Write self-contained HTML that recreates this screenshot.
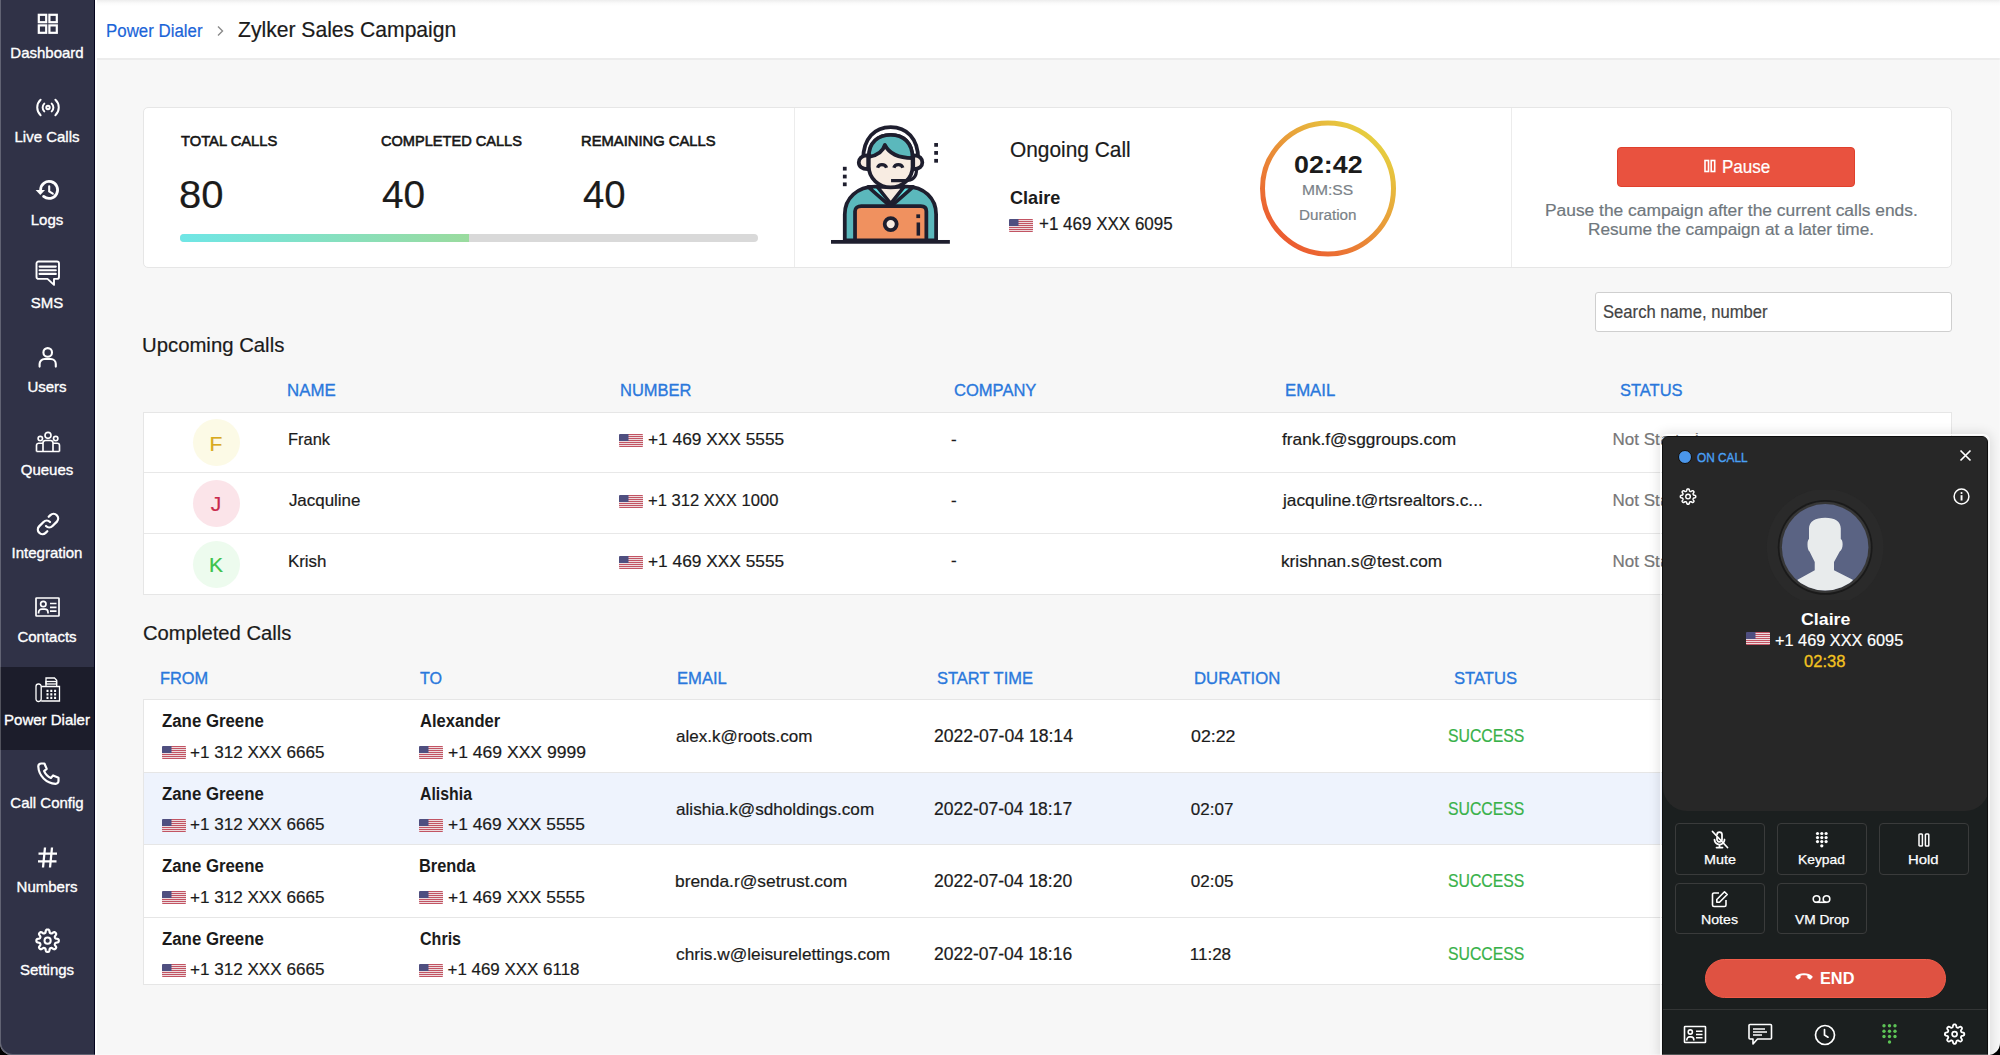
<!DOCTYPE html>
<html><head><meta charset="utf-8">
<style>
*{box-sizing:border-box;margin:0;padding:0}
html,body{width:2000px;height:1055px;overflow:hidden;background:#000}
body{font-family:"Liberation Sans",sans-serif;color:#222;position:relative}
.a{position:absolute;white-space:nowrap;-webkit-text-stroke-width:0.2px}
#win{position:absolute;left:0;top:0;width:2000px;height:1055px;background:#f7f7f7;border-radius:0 0 12px 12px;overflow:hidden}
.flag{position:absolute;width:24px;height:13px;border-radius:1px;background:linear-gradient(#4f4f80,#4f4f80) 0 0/9.5px 7px no-repeat,repeating-linear-gradient(#c25463 0 1px,#eddadd 1px 2px)}
.wb{position:absolute;width:89.5px;height:51.5px;border:1px solid #3a3b3b;border-radius:4px}
.st{-webkit-text-stroke:0.3px currentColor}
.st2{-webkit-text-stroke:0.15px currentColor}
</style></head><body>
<div id="win">
<div class="a" style="left:0;top:0;width:95px;height:1055px;background:#303247"></div>
<div class="a" style="left:0;top:666.67px;width:94px;height:83.33px;background:#1c1d2b"></div>
<div class="a" style="left:94px;top:0;width:1px;height:1055px;background:#03031c"></div>
<div class="a" style="left:95px;top:0;width:2px;height:1055px;background:#fff"></div>
<svg class="a" style="left:37px;top:13px" width="22" height="22" viewBox="0 0 22 22" fill="none" stroke="#fff" stroke-width="2.2"><rect x="1.8" y="1.8" width="7.4" height="7.4"/><rect x="12.4" y="1.8" width="7.4" height="7.4"/><rect x="1.8" y="12.4" width="7.4" height="7.4"/><rect x="12.4" y="12.4" width="7.4" height="7.4"/></svg>
<svg class="a" style="left:36px;top:98px" width="24" height="19" viewBox="0 0 24 19" fill="none" stroke="#fff" stroke-width="2" stroke-linecap="round"><circle cx="12" cy="9.5" r="1.7"/><path d="M8.3 5.6a5.4 5.4 0 0 0 0 7.8M15.7 5.6a5.4 5.4 0 0 1 0 7.8M4.6 1.8a10.5 10.5 0 0 0 0 15.4M19.4 1.8a10.5 10.5 0 0 1 0 15.4"/></svg>
<svg class="a" style="left:35px;top:179px" width="26" height="23" viewBox="0 0 26 23" fill="none" stroke="#fff" stroke-width="2.8" stroke-linecap="round"><path d="M5.6 10.6A8.5 8.5 0 1 1 8.6 17.4"/><path d="M0.6 11h9.4l-4.7 5z" fill="#fff" stroke="none"/><path d="M14.2 7.3v5.2l3.6 2.2" stroke-width="2.1"/></svg>
<svg class="a" style="left:35px;top:260px" width="26" height="27" viewBox="0 0 26 27" fill="none" stroke="#fff" stroke-width="1.9" stroke-linejoin="round"><path d="M3.5 1.5h18.5a2 2 0 0 1 2 2v13.4a2 2 0 0 1-2 2h-3v6l-6.5-6H3.5a2 2 0 0 1-2-2V3.5a2 2 0 0 1 2-2z"/><path d="M4.6 6.6h16.2M4.6 10.3h16.2M4.6 13.9h16.2" stroke-width="2.1" stroke-linecap="round"/></svg>
<svg class="a" style="left:37px;top:346px" width="22" height="23" viewBox="0 0 22 23" fill="none" stroke="#fff" stroke-width="2.1" stroke-linecap="round"><circle cx="10.7" cy="6.4" r="4.3"/><path d="M2.6 20.6v-2.6a5 5 0 0 1 5-5h6.2a5 5 0 0 1 5 5v2.6"/></svg>
<svg class="a" style="left:35px;top:430.5px" width="26" height="22" viewBox="0 0 26 22" fill="none" stroke="#fff" stroke-width="1.65" stroke-linejoin="round"><circle cx="13" cy="4.3" r="3"/><circle cx="5.3" cy="7.5" r="2.2"/><circle cx="20.7" cy="7.5" r="2.2"/><path d="M1.5 20.5v-6a2.3 2.3 0 0 1 2.3-2.3h3.5M24.5 20.5v-6a2.3 2.3 0 0 0-2.3-2.3h-3.5M1.5 20.5h23M8 20.5v-8.5a2.5 2.5 0 0 1 2.5-2.5h5a2.5 2.5 0 0 1 2.5 2.5v8.5"/></svg>
<svg class="a" style="left:36px;top:512px" width="24" height="24" viewBox="0 0 24 24" fill="none" stroke="#fff" stroke-width="2.3" stroke-linecap="round"><path d="M10 14a4.6 4.6 0 0 0 6.5 0l4.4-4.4a4.6 4.6 0 0 0-6.5-6.5l-1.7 1.7"/><path d="M14 10a4.6 4.6 0 0 0-6.5 0l-4.4 4.4a4.6 4.6 0 0 0 6.5 6.5l1.7-1.7"/></svg>
<svg class="a" style="left:35px;top:597px" width="25" height="20" viewBox="0 0 25 20" fill="none" stroke="#fff" stroke-width="1.7"><rect x="1" y="1" width="23" height="18" rx="0.6"/><circle cx="8.3" cy="7" r="2.7"/><path d="M3.6 16.5v-1.2a3.2 3.2 0 0 1 3.2-3.2h3a3.2 3.2 0 0 1 3.2 3.2v1.2M15 6.5h6.5M15 10.3h6.5M15 14.1h6.5"/></svg>
<svg class="a" style="left:35px;top:677px" width="26" height="26" viewBox="0 0 26 26" fill="none" stroke="#fff" stroke-width="1.3"><rect x="1" y="7" width="5.2" height="17.5" rx="2.4"/><path d="M6.2 9.5h18.3v14.5H6.2"/><path d="M11 9.5V1h8.5l2.2 2.2v6.3"/><rect x="11" y="4.5" width="10.5" height="2.5"/><path d="M11.5 13.8h2M15.3 13.8h2M19.1 13.8h2M11.5 17.3h2M15.3 17.3h2M19.1 17.3h2M11.5 20.8h2M15.3 20.8h2M19.1 20.8h2" stroke-width="2.2"/></svg>
<svg class="a" style="left:36px;top:762px" width="24" height="24" viewBox="0 0 24 24" fill="none" stroke="#fff" stroke-width="2.2" stroke-linejoin="round"><path d="M5.2 1.5h3.2l2.3 5.4-2.6 2.2c1.3 2.9 4 5.7 6.8 6.9l2.2-2.6 5.4 2.3v3.2c0 1.6-1.3 3-3 2.9C10.3 21.3 2.7 13.7 2.3 4.5c-.1-1.7 1.3-3 2.9-3z"/></svg>
<svg class="a" style="left:37px;top:846px" width="21" height="23" viewBox="0 0 21 23" fill="none" stroke="#fff" stroke-width="2.3"><path d="M8 1.5L6 21.5M15 1.5l-2 20M1.5 7.6h18.5M1 15.4h18.5"/></svg>
<svg class="a" style="left:33px;top:927px" width="28" height="28" viewBox="0 0 28 28" fill="none" stroke="#fff" stroke-linejoin="round"><path d="M25.80 13.70L25.79 13.99L25.75 14.28L25.68 14.57L25.55 14.85L25.32 15.11L24.92 15.34L24.35 15.51L23.68 15.63L23.10 15.74L22.70 15.87L22.45 16.03L22.29 16.20L22.17 16.38L22.08 16.57L21.99 16.76L21.91 16.96L21.85 17.16L21.80 17.37L21.80 17.61L21.87 17.89L22.06 18.27L22.39 18.76L22.77 19.32L23.06 19.84L23.18 20.28L23.16 20.63L23.05 20.92L22.90 21.17L22.72 21.40L22.52 21.62L22.30 21.82L22.07 22.00L21.82 22.15L21.53 22.26L21.18 22.28L20.74 22.16L20.22 21.87L19.66 21.49L19.17 21.16L18.79 20.97L18.51 20.90L18.27 20.90L18.06 20.95L17.86 21.01L17.66 21.09L17.47 21.18L17.28 21.27L17.10 21.39L16.93 21.55L16.77 21.80L16.64 22.20L16.53 22.78L16.41 23.45L16.24 24.02L16.01 24.42L15.75 24.65L15.47 24.78L15.18 24.85L14.89 24.89L14.60 24.90L14.31 24.89L14.02 24.85L13.73 24.78L13.45 24.65L13.19 24.42L12.96 24.02L12.79 23.45L12.67 22.78L12.56 22.20L12.43 21.80L12.27 21.55L12.10 21.39L11.92 21.27L11.73 21.18L11.54 21.09L11.34 21.01L11.14 20.95L10.93 20.90L10.69 20.90L10.41 20.97L10.03 21.16L9.54 21.49L8.98 21.87L8.46 22.16L8.02 22.28L7.67 22.26L7.38 22.15L7.13 22.00L6.90 21.82L6.68 21.62L6.48 21.40L6.30 21.17L6.15 20.92L6.04 20.63L6.02 20.28L6.14 19.84L6.43 19.32L6.81 18.76L7.14 18.27L7.33 17.89L7.40 17.61L7.40 17.37L7.35 17.16L7.29 16.96L7.21 16.76L7.12 16.57L7.03 16.38L6.91 16.20L6.75 16.03L6.50 15.87L6.10 15.74L5.52 15.63L4.85 15.51L4.28 15.34L3.88 15.11L3.65 14.85L3.52 14.57L3.45 14.28L3.41 13.99L3.40 13.70L3.41 13.41L3.45 13.12L3.52 12.83L3.65 12.55L3.88 12.29L4.28 12.06L4.85 11.89L5.52 11.77L6.10 11.66L6.50 11.53L6.75 11.37L6.91 11.20L7.03 11.02L7.12 10.83L7.21 10.64L7.29 10.44L7.35 10.24L7.40 10.03L7.40 9.79L7.33 9.51L7.14 9.13L6.81 8.64L6.43 8.08L6.14 7.56L6.02 7.12L6.04 6.77L6.15 6.48L6.30 6.23L6.48 6.00L6.68 5.78L6.90 5.58L7.13 5.40L7.38 5.25L7.67 5.14L8.02 5.12L8.46 5.24L8.98 5.53L9.54 5.91L10.03 6.24L10.41 6.43L10.69 6.50L10.93 6.50L11.14 6.45L11.34 6.39L11.54 6.31L11.73 6.22L11.92 6.13L12.10 6.01L12.27 5.85L12.43 5.60L12.56 5.20L12.67 4.62L12.79 3.95L12.96 3.38L13.19 2.98L13.45 2.75L13.73 2.62L14.02 2.55L14.31 2.51L14.60 2.50L14.89 2.51L15.18 2.55L15.47 2.62L15.75 2.75L16.01 2.98L16.24 3.38L16.41 3.95L16.53 4.62L16.64 5.20L16.77 5.60L16.93 5.85L17.10 6.01L17.28 6.13L17.47 6.22L17.66 6.31L17.86 6.39L18.06 6.45L18.27 6.50L18.51 6.50L18.79 6.43L19.17 6.24L19.66 5.91L20.22 5.53L20.74 5.24L21.18 5.12L21.53 5.14L21.82 5.25L22.07 5.40L22.30 5.58L22.52 5.78L22.72 6.00L22.90 6.23L23.05 6.48L23.16 6.77L23.18 7.12L23.06 7.56L22.77 8.08L22.39 8.64L22.06 9.13L21.87 9.51L21.80 9.79L21.80 10.03L21.85 10.24L21.91 10.44L21.99 10.64L22.08 10.83L22.17 11.02L22.29 11.20L22.45 11.37L22.70 11.53L23.10 11.66L23.68 11.77L24.35 11.89L24.92 12.06L25.32 12.29L25.55 12.55L25.68 12.83L25.75 13.12L25.79 13.41Z" stroke-width="2.2"/><circle cx="14.600000000000001" cy="13.700000000000045" r="3.1" stroke-width="2.0"/></svg>

<div class="a" style="-webkit-text-stroke:0.35px #fff;left:0;width:94px;text-align:center;top:45.20px;font-size:15px;line-height:1;color:#fff">Dashboard</div>
<div class="a" style="-webkit-text-stroke:0.35px #fff;left:0;width:94px;text-align:center;top:128.53px;font-size:15px;line-height:1;color:#fff">Live Calls</div>
<div class="a" style="-webkit-text-stroke:0.35px #fff;left:0;width:94px;text-align:center;top:211.86px;font-size:15px;line-height:1;color:#fff">Logs</div>
<div class="a" style="-webkit-text-stroke:0.35px #fff;left:0;width:94px;text-align:center;top:295.19px;font-size:15px;line-height:1;color:#fff">SMS</div>
<div class="a" style="-webkit-text-stroke:0.35px #fff;left:0;width:94px;text-align:center;top:378.52px;font-size:15px;line-height:1;color:#fff">Users</div>
<div class="a" style="-webkit-text-stroke:0.35px #fff;left:0;width:94px;text-align:center;top:461.85px;font-size:15px;line-height:1;color:#fff">Queues</div>
<div class="a" style="-webkit-text-stroke:0.35px #fff;left:0;width:94px;text-align:center;top:545.18px;font-size:15px;line-height:1;color:#fff">Integration</div>
<div class="a" style="-webkit-text-stroke:0.35px #fff;left:0;width:94px;text-align:center;top:628.51px;font-size:15px;line-height:1;color:#fff">Contacts</div>
<div class="a" style="-webkit-text-stroke:0.35px #fff;left:0;width:94px;text-align:center;top:711.84px;font-size:15px;line-height:1;color:#fff">Power Dialer</div>
<div class="a" style="-webkit-text-stroke:0.35px #fff;left:0;width:94px;text-align:center;top:795.17px;font-size:15px;line-height:1;color:#fff">Call Config</div>
<div class="a" style="-webkit-text-stroke:0.35px #fff;left:0;width:94px;text-align:center;top:878.50px;font-size:15px;line-height:1;color:#fff">Numbers</div>
<div class="a" style="-webkit-text-stroke:0.35px #fff;left:0;width:94px;text-align:center;top:961.83px;font-size:15px;line-height:1;color:#fff">Settings</div>
<div class="a" style="left:97px;top:0;width:1903px;height:60px;background:linear-gradient(#ededed,#fafafa 3px,#fff 6px);border-bottom:2px solid #ececec"></div>
<svg class="a" style="left:215px;top:24px" width="10" height="14" viewBox="0 0 10 14"><path d="M3 2.5l4.5 4.5L3 11.5" fill="none" stroke="#8a8a8a" stroke-width="1.4"/></svg>
<div class="a" style="left:143px;top:107px;width:1809px;height:161px;background:#fff;border:1px solid #e6e6e6;border-radius:5px"></div>
<div class="a" style="left:794px;top:108px;width:1px;height:159px;background:#ececec"></div>
<div class="a" style="left:1511px;top:108px;width:1px;height:159px;background:#ececec"></div>
<div class="a" style="left:180px;top:233.5px;width:578px;height:8px;border-radius:4px;background:#d9d9d9;overflow:hidden"><div style="width:289px;height:8px;background:linear-gradient(90deg,#6fe6e6,#9adb9e)"></div></div>
<svg class="a" style="left:825px;top:118px" width="130" height="132" viewBox="0 0 1039 1055">
 <g stroke="#1e1e2e" stroke-width="30" stroke-linejoin="round" stroke-linecap="butt">
  <!-- body -->
  <path d="M158 978V770C158 640 260 548 400 548H650C790 548 888 640 888 770V978Z" fill="#5bb8bc"/>
  <!-- collar -->
  <path d="M345 550L525 708L705 550Z" fill="#62e0e2" stroke-width="28"/>
  <path d="M420 552L525 684L630 552Z" fill="#f8ece2" stroke-width="28"/>
  <!-- laptop -->
  <path d="M240 978V745C240 720 262 705 290 705H765C793 705 810 720 810 745V978Z" fill="#f0915f"/>
  <circle cx="525" cy="848" r="48" fill="#f8ece2"/>
  <!-- headset band -->
  <path d="M305 330C305 160 400 72 525 72C650 72 745 160 745 330" fill="#fff"/>
  <!-- face -->
  <path d="M350 330C350 200 420 135 525 135C630 135 700 200 700 330V390C700 480 620 555 525 555C430 555 350 480 350 390Z" fill="#f8ece2"/>
  <!-- hair -->
  <path d="M350 310C350 195 425 135 525 135C625 135 700 195 700 320C620 320 520 300 478 215C460 280 410 300 350 310Z" fill="#5bb8bc"/>
  <!-- ear pieces -->
  <path d="M345 300C290 295 270 330 270 355C270 385 295 410 345 408Z" fill="#f8ece2"/>
  <path d="M705 300C760 295 778 330 778 355C778 385 755 410 705 408Z" fill="#f8ece2"/>
  <!-- mic -->
  <path d="M730 408C735 470 700 500 640 500H528" fill="none" stroke-width="26"/>
  <!-- eyes -->
  <path d="M420 398C430 365 480 365 492 398M550 398C560 365 612 365 622 398" fill="none" stroke-width="26"/>
 </g>
 <g fill="#1e1e2e">
  <rect x="48" y="975" width="950" height="30"/>
  <rect x="730" y="770" width="30" height="30"/>
  <rect x="732" y="835" width="28" height="105"/>
  <rect x="873" y="200" width="30" height="30"/><rect x="873" y="264" width="30" height="30"/><rect x="873" y="327" width="30" height="30"/>
  <rect x="143" y="390" width="30" height="30"/><rect x="143" y="453" width="30" height="30"/><rect x="143" y="515" width="30" height="30"/>
 </g>
</svg>
<div class="flag" style="left:1009.4px;top:219.2px"></div>
<svg class="a" style="left:1258px;top:118px" width="140" height="140" viewBox="0 0 140 140"><defs><linearGradient id="rg" x1="0.15" y1="0.9" x2="0.85" y2="0.1"><stop offset="0" stop-color="#ec5a30"/><stop offset="1" stop-color="#e6cf40"/></linearGradient></defs><circle cx="70" cy="70.5" r="65.5" fill="#fff" stroke="url(#rg)" stroke-width="5"/></svg>
<div class="a" style="left:1617px;top:147px;width:238px;height:40px;background:#e9523f;border:1px solid #e0402c;border-radius:4px"></div>
<svg class="a" style="left:1704px;top:159px" width="12" height="14" viewBox="0 0 12 14"><rect x="1" y="1.5" width="3.5" height="11" fill="none" stroke="#fff" stroke-width="1.6"/><rect x="7.2" y="1.5" width="3.5" height="11" fill="none" stroke="#fff" stroke-width="1.6"/></svg>
<div class="a" style="left:1595px;top:292px;width:357px;height:40px;background:#fff;border:1px solid #cfcfcf;border-radius:3px"></div>
<div class="a" style="left:143px;top:411.5px;width:1809px;height:183.5px;background:#fff;border:1px solid #e6e6e6"></div>
<div class="a" style="left:144px;top:472px;width:1807px;height:1px;background:#e8e8e8"></div>
<div class="a" style="left:144px;top:533px;width:1807px;height:1px;background:#e8e8e8"></div>
<div class="a" style="left:192.5px;top:418.8px;width:47px;height:47px;border-radius:50%;background:#fcfae6"></div>
<div class="a" style="left:192.5px;top:432.52px;width:47px;text-align:center;font-size:21px;line-height:1;color:#d8a91e">F</div>
<div class="flag" style="left:619px;top:434.4px"></div>
<div class="a" style="left:951px;top:430.61px;font-size:17px;line-height:1;color:#1b1b1b">-</div>
<div class="a" style="left:192.5px;top:479.7px;width:47px;height:47px;border-radius:50%;background:#fbe4e9"></div>
<div class="a" style="left:192.5px;top:493.42px;width:47px;text-align:center;font-size:21px;line-height:1;color:#c9294c">J</div>
<div class="flag" style="left:619px;top:495.3px"></div>
<div class="a" style="left:951px;top:491.51px;font-size:17px;line-height:1;color:#1b1b1b">-</div>
<div class="a" style="left:192.5px;top:540.6px;width:47px;height:47px;border-radius:50%;background:#edfbee"></div>
<div class="a" style="left:192.5px;top:554.32px;width:47px;text-align:center;font-size:21px;line-height:1;color:#3dc24b">K</div>
<div class="flag" style="left:619px;top:556.2px"></div>
<div class="a" style="left:951px;top:552.41px;font-size:17px;line-height:1;color:#1b1b1b">-</div>
<div class="a" style="left:143px;top:699px;width:1809px;height:285.5px;background:#fff;border:1px solid #e6e6e6"></div>
<div class="a" style="left:144px;top:772.3px;width:1807px;height:72.5px;background:#eef3fd"></div>
<div class="a" style="left:144px;top:772px;width:1807px;height:1px;background:#e6e6e6"></div>
<div class="a" style="left:144px;top:844.3px;width:1807px;height:1px;background:#e6e6e6"></div>
<div class="a" style="left:144px;top:917px;width:1807px;height:1px;background:#e6e6e6"></div>
<div class="flag" style="left:162px;top:746.2px"></div>
<div class="flag" style="left:419px;top:746.2px"></div>
<div class="flag" style="left:162px;top:818.8px"></div>
<div class="flag" style="left:419px;top:818.8px"></div>
<div class="flag" style="left:162px;top:891.3px"></div>
<div class="flag" style="left:419px;top:891.3px"></div>
<div class="flag" style="left:162px;top:963.9px"></div>
<div class="flag" style="left:419px;top:963.9px"></div>
<div class="a" style="left:106.48px;top:22.00px;font-size:18.41px;line-height:1;font-weight:normal;color:#1b64d8;transform:scaleX(0.9162);transform-origin:0 0;">Power Dialer</div>
<div class="a" style="left:237.90px;top:19.00px;font-size:22.03px;line-height:1;font-weight:normal;color:#1b1b1b;transform:scaleX(0.9592);transform-origin:0 0;">Zylker Sales Campaign</div>
<div class="a" style="left:181.00px;top:133.00px;font-size:15.07px;line-height:1;font-weight:normal;color:#161616;transform:scaleX(0.9776);transform-origin:0 0;-webkit-text-stroke-width:0.6px">TOTAL CALLS</div>
<div class="a" style="left:381.20px;top:133.00px;font-size:15.07px;line-height:1;font-weight:normal;color:#161616;transform:scaleX(0.9677);transform-origin:0 0;-webkit-text-stroke-width:0.6px">COMPLETED CALLS</div>
<div class="a" style="left:581.42px;top:133.00px;font-size:15.07px;line-height:1;font-weight:normal;color:#161616;transform:scaleX(0.9800);transform-origin:0 0;-webkit-text-stroke-width:0.6px">REMAINING CALLS</div>
<div class="a" style="left:179.45px;top:176.00px;font-size:38.12px;line-height:1;font-weight:normal;color:#1b1b1b;transform:scaleX(1.0499);transform-origin:0 0;">80</div>
<div class="a" style="left:381.70px;top:176.00px;font-size:38.12px;line-height:1;font-weight:normal;color:#1b1b1b;transform:scaleX(1.0171);transform-origin:0 0;">40</div>
<div class="a" style="left:582.90px;top:176.00px;font-size:38.12px;line-height:1;font-weight:normal;color:#1b1b1b;transform:scaleX(1.0050);transform-origin:0 0;">40</div>
<div class="a" style="left:1010.03px;top:139.00px;font-size:21.59px;line-height:1;font-weight:normal;color:#1b1b1b;transform:scaleX(0.9678);transform-origin:0 0;">Ongoing Call</div>
<div class="a" style="left:1010.40px;top:189.00px;font-size:18.84px;line-height:1;font-weight:bold;color:#1b1b1b;-webkit-text-stroke-width:0;transform:scaleX(0.9622);transform-origin:0 0;">Claire</div>
<div class="a" style="left:1038.80px;top:216.00px;font-size:17.83px;line-height:1;font-weight:normal;color:#1b1b1b;transform:scaleX(0.9533);transform-origin:0 0;">+1 469 XXX 6095</div>
<div class="a" style="left:1294.20px;top:153.00px;font-size:24.35px;line-height:1;font-weight:bold;color:#1b1b1b;-webkit-text-stroke-width:0;transform:scaleX(1.1017);transform-origin:0 0;">02:42</div>
<div class="a" style="left:1302.05px;top:183.00px;font-size:14.93px;line-height:1;font-weight:normal;color:#7a8288;transform:scaleX(1.0467);transform-origin:0 0;">MM:SS</div>
<div class="a" style="left:1299.31px;top:209.00px;font-size:13.91px;line-height:1;font-weight:normal;color:#7a8288;transform:scaleX(1.0939);transform-origin:0 0;">Duration</div>
<div class="a" style="left:1722.09px;top:158.00px;font-size:18.84px;line-height:1;font-weight:normal;color:#fff;transform:scaleX(0.9053);transform-origin:0 0;">Pause</div>
<div class="a" style="left:1544.98px;top:202.00px;font-size:17.03px;line-height:1;font-weight:normal;color:#6f777d;transform:scaleX(1.0210);transform-origin:0 0;">Pause the campaign after the current calls ends.</div>
<div class="a" style="left:1588.49px;top:221.00px;font-size:17.03px;line-height:1;font-weight:normal;color:#6f777d;transform:scaleX(1.0114);transform-origin:0 0;">Resume the campaign at a later time.</div>
<div class="a" style="left:1602.50px;top:303.00px;font-size:18.12px;line-height:1;font-weight:normal;color:#444;transform:scaleX(0.9183);transform-origin:0 0;">Search name, number</div>
<div class="a" style="left:142.23px;top:336.00px;font-size:19.86px;line-height:1;font-weight:normal;color:#1b1b1b;transform:scaleX(1.0233);transform-origin:0 0;">Upcoming Calls</div>
<div class="a" style="left:287.23px;top:382.00px;font-size:17.39px;line-height:1;font-weight:normal;color:#2a78dc;transform:scaleX(0.9689);transform-origin:0 0;-webkit-text-stroke-width:0.35px">NAME</div>
<div class="a" style="left:620.05px;top:382.00px;font-size:17.39px;line-height:1;font-weight:normal;color:#2a78dc;transform:scaleX(0.9492);transform-origin:0 0;-webkit-text-stroke-width:0.35px">NUMBER</div>
<div class="a" style="left:954.00px;top:382.00px;font-size:17.39px;line-height:1;font-weight:normal;color:#2a78dc;transform:scaleX(0.9520);transform-origin:0 0;-webkit-text-stroke-width:0.35px">COMPANY</div>
<div class="a" style="left:1285.44px;top:382.00px;font-size:17.39px;line-height:1;font-weight:normal;color:#2a78dc;transform:scaleX(0.9635);transform-origin:0 0;-webkit-text-stroke-width:0.35px">EMAIL</div>
<div class="a" style="left:1620.00px;top:382.00px;font-size:17.39px;line-height:1;font-weight:normal;color:#2a78dc;transform:scaleX(0.9484);transform-origin:0 0;-webkit-text-stroke-width:0.35px">STATUS</div>
<div class="a" style="left:287.93px;top:432.00px;font-size:16.96px;line-height:1;font-weight:normal;color:#1b1b1b;transform:scaleX(0.9714);transform-origin:0 0;">Frank</div>
<div class="a" style="left:648.20px;top:432.00px;font-size:16.96px;line-height:1;font-weight:normal;color:#1b1b1b;transform:scaleX(1.0215);transform-origin:0 0;">+1 469 XXX 5555</div>
<div class="a" style="left:1282.00px;top:431.00px;font-size:17px;line-height:1;font-weight:normal;color:#1b1b1b;transform:scaleX(1.0169);transform-origin:0 0;">frank.f@sggroups.com</div>
<div class="a" style="left:1612.60px;top:431.00px;font-size:17px;line-height:1;font-weight:normal;color:#777;">Not Started</div>
<div class="a" style="left:288.90px;top:493.00px;font-size:16.96px;line-height:1;font-weight:normal;color:#1b1b1b;">Jacquline</div>
<div class="a" style="left:648.20px;top:493.00px;font-size:16.96px;line-height:1;font-weight:normal;color:#1b1b1b;transform:scaleX(0.9786);transform-origin:0 0;">+1 312 XXX 1000</div>
<div class="a" style="left:1283.01px;top:492.00px;font-size:17px;line-height:1;font-weight:normal;color:#1b1b1b;transform:scaleX(1.0150);transform-origin:0 0;">jacquline.t@rtsrealtors.c...</div>
<div class="a" style="left:1612.60px;top:492.00px;font-size:17px;line-height:1;font-weight:normal;color:#777;">Not Started</div>
<div class="a" style="left:287.90px;top:554.00px;font-size:16.96px;line-height:1;font-weight:normal;color:#1b1b1b;">Krish</div>
<div class="a" style="left:648.20px;top:554.00px;font-size:16.96px;line-height:1;font-weight:normal;color:#1b1b1b;transform:scaleX(1.0215);transform-origin:0 0;">+1 469 XXX 5555</div>
<div class="a" style="left:1280.99px;top:553.00px;font-size:17px;line-height:1;font-weight:normal;color:#1b1b1b;transform:scaleX(1.0138);transform-origin:0 0;">krishnan.s@test.com</div>
<div class="a" style="left:1612.60px;top:553.00px;font-size:17px;line-height:1;font-weight:normal;color:#777;">Not Started</div>
<div class="a" style="left:142.99px;top:623.00px;font-size:20.0px;line-height:1;font-weight:normal;color:#1b1b1b;transform:scaleX(1.0115);transform-origin:0 0;">Completed Calls</div>
<div class="a" style="left:160.26px;top:670.00px;font-size:17.39px;line-height:1;font-weight:normal;color:#2a78dc;transform:scaleX(0.9421);transform-origin:0 0;-webkit-text-stroke-width:0.35px">FROM</div>
<div class="a" style="left:419.60px;top:670.00px;font-size:17.39px;line-height:1;font-weight:normal;color:#2a78dc;transform:scaleX(0.9271);transform-origin:0 0;-webkit-text-stroke-width:0.35px">TO</div>
<div class="a" style="left:677.04px;top:670.00px;font-size:17.39px;line-height:1;font-weight:normal;color:#2a78dc;transform:scaleX(0.9557);transform-origin:0 0;-webkit-text-stroke-width:0.35px">EMAIL</div>
<div class="a" style="left:936.80px;top:670.00px;font-size:17.39px;line-height:1;font-weight:normal;color:#2a78dc;transform:scaleX(0.9497);transform-origin:0 0;-webkit-text-stroke-width:0.35px">START TIME</div>
<div class="a" style="left:1194.24px;top:670.00px;font-size:17.39px;line-height:1;font-weight:normal;color:#2a78dc;transform:scaleX(0.9648);transform-origin:0 0;-webkit-text-stroke-width:0.35px">DURATION</div>
<div class="a" style="left:1453.60px;top:670.00px;font-size:17.39px;line-height:1;font-weight:normal;color:#2a78dc;transform:scaleX(0.9546);transform-origin:0 0;-webkit-text-stroke-width:0.35px">STATUS</div>
<div class="a" style="left:162.00px;top:713.00px;font-size:17.68px;line-height:1;font-weight:bold;color:#1b1b1b;-webkit-text-stroke-width:0;transform:scaleX(0.9512);transform-origin:0 0;">Zane Greene</div>
<div class="a" style="left:190.00px;top:745.00px;font-size:16.96px;line-height:1;font-weight:normal;color:#1b1b1b;transform:scaleX(1.0087);transform-origin:0 0;">+1 312 XXX 6665</div>
<div class="a" style="left:419.70px;top:713.00px;font-size:17.68px;line-height:1;font-weight:bold;color:#1b1b1b;-webkit-text-stroke-width:0;transform:scaleX(0.9384);transform-origin:0 0;">Alexander</div>
<div class="a" style="left:447.50px;top:745.00px;font-size:16.96px;line-height:1;font-weight:normal;color:#1b1b1b;transform:scaleX(1.0351);transform-origin:0 0;">+1 469 XXX 9999</div>
<div class="a" style="left:676.00px;top:728.00px;font-size:17px;line-height:1;font-weight:normal;color:#1b1b1b;">alex.k@roots.com</div>
<div class="a" style="left:934.00px;top:728.00px;font-size:17.5px;line-height:1;font-weight:normal;color:#1b1b1b;transform:scaleX(1.0055);transform-origin:0 0;">2022-07-04 18:14</div>
<div class="a" style="left:1190.80px;top:728.00px;font-size:17px;line-height:1;font-weight:normal;color:#1b1b1b;transform:scaleX(1.0455);transform-origin:0 0;">02:22</div>
<div class="a" style="left:1448.10px;top:728.00px;font-size:17.68px;line-height:1;font-weight:normal;color:#38b149;transform:scaleX(0.8931);transform-origin:0 0;">SUCCESS</div>
<div class="a" style="left:162.00px;top:786.00px;font-size:17.68px;line-height:1;font-weight:bold;color:#1b1b1b;-webkit-text-stroke-width:0;transform:scaleX(0.9512);transform-origin:0 0;">Zane Greene</div>
<div class="a" style="left:190.00px;top:817.00px;font-size:16.96px;line-height:1;font-weight:normal;color:#1b1b1b;transform:scaleX(1.0087);transform-origin:0 0;">+1 312 XXX 6665</div>
<div class="a" style="left:419.70px;top:786.00px;font-size:17.68px;line-height:1;font-weight:bold;color:#1b1b1b;-webkit-text-stroke-width:0;transform:scaleX(0.8965);transform-origin:0 0;">Alishia</div>
<div class="a" style="left:447.50px;top:817.00px;font-size:16.96px;line-height:1;font-weight:normal;color:#1b1b1b;transform:scaleX(1.0276);transform-origin:0 0;">+1 469 XXX 5555</div>
<div class="a" style="left:676.00px;top:801.00px;font-size:17px;line-height:1;font-weight:normal;color:#1b1b1b;transform:scaleX(1.0069);transform-origin:0 0;">alishia.k@sdholdings.com</div>
<div class="a" style="left:934.00px;top:801.00px;font-size:17.5px;line-height:1;font-weight:normal;color:#1b1b1b;">2022-07-04 18:17</div>
<div class="a" style="left:1190.80px;top:801.00px;font-size:17px;line-height:1;font-weight:normal;color:#1b1b1b;">02:07</div>
<div class="a" style="left:1448.10px;top:801.00px;font-size:17.68px;line-height:1;font-weight:normal;color:#38b149;transform:scaleX(0.8931);transform-origin:0 0;">SUCCESS</div>
<div class="a" style="left:162.00px;top:858.00px;font-size:17.68px;line-height:1;font-weight:bold;color:#1b1b1b;-webkit-text-stroke-width:0;transform:scaleX(0.9512);transform-origin:0 0;">Zane Greene</div>
<div class="a" style="left:190.00px;top:890.00px;font-size:16.96px;line-height:1;font-weight:normal;color:#1b1b1b;transform:scaleX(1.0087);transform-origin:0 0;">+1 312 XXX 6665</div>
<div class="a" style="left:418.77px;top:858.00px;font-size:17.68px;line-height:1;font-weight:bold;color:#1b1b1b;-webkit-text-stroke-width:0;transform:scaleX(0.9275);transform-origin:0 0;">Brenda</div>
<div class="a" style="left:447.50px;top:890.00px;font-size:16.96px;line-height:1;font-weight:normal;color:#1b1b1b;transform:scaleX(1.0276);transform-origin:0 0;">+1 469 XXX 5555</div>
<div class="a" style="left:674.98px;top:873.00px;font-size:17px;line-height:1;font-weight:normal;color:#1b1b1b;transform:scaleX(1.0223);transform-origin:0 0;">brenda.r@setrust.com</div>
<div class="a" style="left:934.00px;top:873.00px;font-size:17.5px;line-height:1;font-weight:normal;color:#1b1b1b;">2022-07-04 18:20</div>
<div class="a" style="left:1190.80px;top:873.00px;font-size:17px;line-height:1;font-weight:normal;color:#1b1b1b;">02:05</div>
<div class="a" style="left:1448.10px;top:873.00px;font-size:17.68px;line-height:1;font-weight:normal;color:#38b149;transform:scaleX(0.8931);transform-origin:0 0;">SUCCESS</div>
<div class="a" style="left:162.00px;top:931.00px;font-size:17.68px;line-height:1;font-weight:bold;color:#1b1b1b;-webkit-text-stroke-width:0;transform:scaleX(0.9512);transform-origin:0 0;">Zane Greene</div>
<div class="a" style="left:190.00px;top:962.00px;font-size:16.96px;line-height:1;font-weight:normal;color:#1b1b1b;transform:scaleX(1.0087);transform-origin:0 0;">+1 312 XXX 6665</div>
<div class="a" style="left:419.70px;top:931.00px;font-size:17.68px;line-height:1;font-weight:bold;color:#1b1b1b;-webkit-text-stroke-width:0;transform:scaleX(0.9086);transform-origin:0 0;">Chris</div>
<div class="a" style="left:447.50px;top:962.00px;font-size:16.96px;line-height:1;font-weight:normal;color:#1b1b1b;">+1 469 XXX 6118</div>
<div class="a" style="left:676.00px;top:946.00px;font-size:17px;line-height:1;font-weight:normal;color:#1b1b1b;transform:scaleX(1.0153);transform-origin:0 0;">chris.w@leisurelettings.com</div>
<div class="a" style="left:934.00px;top:946.00px;font-size:17.5px;line-height:1;font-weight:normal;color:#1b1b1b;">2022-07-04 18:16</div>
<div class="a" style="left:1189.80px;top:946.00px;font-size:17px;line-height:1;font-weight:normal;color:#1b1b1b;">11:28</div>
<div class="a" style="left:1448.10px;top:946.00px;font-size:17.68px;line-height:1;font-weight:normal;color:#38b149;transform:scaleX(0.8931);transform-origin:0 0;">SUCCESS</div>
<!-- WIDGET -->
<div class="a" style="left:1661px;top:435px;width:328px;height:625px;border-radius:6px;box-shadow:0 0 0 1px rgba(255,255,255,0.9),0 0 12px 2px rgba(0,0,0,0.12)"></div>
<div class="a" style="left:1662px;top:436px;width:326px;height:625px;background:#1b1f1f;border-radius:6px;border:1px solid #0e0e0e;overflow:hidden">
 <div style="position:absolute;left:0;top:0;width:326px;height:374px;background:#272727;border-radius:0 0 24px 24px"></div>
 <div style="position:absolute;left:0;top:572px;width:326px;height:1px;background:#333535"></div>
</div>
<div class="a" style="left:1677.5px;top:450px;width:14px;height:14px;border-radius:50%;background:#4a96ea;border:1.5px solid #120c06"></div>
<svg class="a" style="left:1760px;top:490px" width="130" height="110" viewBox="0 0 1247 1055"><defs><clipPath id="avc"><circle cx="625" cy="550" r="415"/></clipPath></defs>
 <circle cx="625" cy="550" r="560" fill="#2a2a2a"/>
 <circle cx="625" cy="550" r="455" fill="#1a1a1a"/>
 <circle cx="625" cy="550" r="438" fill="#363636"/>
 <circle cx="625" cy="550" r="415" fill="#5a6383"/>
 <path clip-path="url(#avc)" fill="#e8ebec" d="M625 265C720 265 775 300 775 370L775 470C800 480 800 570 765 590L710 690L710 770L890 860L900 1000L350 1000L360 860L525 770L525 690L475 590C450 570 450 480 470 470L470 370C470 300 530 265 625 265Z"/>
</svg>
<div class="wb" style="left:1675px;top:823px"></div>
<div class="wb" style="left:1777px;top:823px"></div>
<div class="wb" style="left:1879px;top:823px"></div>
<div class="wb" style="left:1675px;top:882.5px"></div>
<div class="wb" style="left:1777px;top:882.5px"></div>
<!-- END -->
<div class="a" style="left:1704.5px;top:958.5px;width:241px;height:39px;border-radius:20px;background:#df5242;border:1px solid #f25c49"></div>
<svg class="a" style="left:1794px;top:971px" width="20" height="11" viewBox="0 0 20 11"><path d="M10 2.2c-3.6 0-6.6 1.2-8.4 3 -.4.4-.4 1 0 1.4l1.6 1.6c.4.4 1 .4 1.4.1l1.6-1.2c.3-.2.4-.5.4-.8V4.8c1.1-.4 2.2-.5 3.4-.5s2.3.1 3.4.5v1.5c0 .3.1.6.4.8l1.6 1.2c.4.3 1 .3 1.4-.1l1.6-1.6c.4-.4.4-1 0-1.4C16.6 3.4 13.6 2.2 10 2.2z" fill="#fff"/></svg>

<div class="flag" style="left:1746.4px;top:632.1px"></div>
<div class="a" style="left:1696.50px;top:451.00px;font-size:13.62px;line-height:1;font-weight:normal;color:#4aa0f5;transform:scaleX(0.8676);transform-origin:0 0;-webkit-text-stroke-width:0.4px">ON CALL</div>
<div class="a" style="left:1800.80px;top:611.00px;font-size:17.25px;line-height:1;font-weight:bold;color:#fff;-webkit-text-stroke-width:0;transform:scaleX(1.0306);transform-origin:0 0;">Claire</div>
<div class="a" style="left:1774.80px;top:633.00px;font-size:16.67px;line-height:1;font-weight:normal;color:#fff;transform:scaleX(0.9787);transform-origin:0 0;-webkit-text-stroke:0.2px #fff">+1 469 XXX 6095</div>
<div class="a" style="left:1804.20px;top:654.00px;font-size:15.94px;line-height:1;font-weight:normal;color:#f4c320;transform:scaleX(1.0395);transform-origin:0 0;-webkit-text-stroke:0.3px #f4c320">02:38</div>
<div class="a" style="left:1704.24px;top:853.00px;font-size:13.5px;line-height:1;font-weight:normal;color:#fff;transform:scaleX(1.0630);transform-origin:0 0;-webkit-text-stroke:0.25px #fff">Mute</div>
<div class="a" style="left:1798.28px;top:853.00px;font-size:13.5px;line-height:1;font-weight:normal;color:#fff;transform:scaleX(1.0231);transform-origin:0 0;-webkit-text-stroke:0.25px #fff">Keypad</div>
<div class="a" style="left:1908.00px;top:853.00px;font-size:13.5px;line-height:1;font-weight:normal;color:#fff;transform:scaleX(1.1007);transform-origin:0 0;-webkit-text-stroke:0.25px #fff">Hold</div>
<div class="a" style="left:1700.95px;top:913.00px;font-size:13.5px;line-height:1;font-weight:normal;color:#fff;transform:scaleX(1.0488);transform-origin:0 0;-webkit-text-stroke:0.25px #fff">Notes</div>
<div class="a" style="left:1795.00px;top:913.00px;font-size:13.5px;line-height:1;font-weight:normal;color:#fff;transform:scaleX(1.0179);transform-origin:0 0;-webkit-text-stroke:0.25px #fff">VM Drop</div>
<div class="a" style="left:1820.42px;top:971.00px;font-size:16.67px;line-height:1;font-weight:bold;color:#fff;-webkit-text-stroke-width:0;transform:scaleX(0.9784);transform-origin:0 0;">END</div>
<svg class="a" style="left:1959px;top:449px" width="13" height="13" viewBox="0 0 13 13"><path d="M1.5 1.5l10 10M11.5 1.5l-10 10" stroke="#fff" stroke-width="1.7"/></svg>
<svg class="a" style="left:1678px;top:487px" width="20" height="20" viewBox="0 0 20 20" fill="none" stroke="#fff" stroke-linejoin="round"><path d="M17.75 9.60L17.74 9.80L17.72 10.00L17.67 10.20L17.58 10.39L17.43 10.57L17.17 10.73L16.79 10.85L16.35 10.94L15.97 11.02L15.71 11.12L15.54 11.23L15.43 11.35L15.35 11.48L15.28 11.61L15.22 11.74L15.17 11.88L15.12 12.02L15.09 12.17L15.08 12.33L15.12 12.53L15.24 12.78L15.45 13.11L15.70 13.48L15.88 13.84L15.96 14.13L15.94 14.37L15.86 14.56L15.76 14.74L15.63 14.90L15.49 15.04L15.35 15.18L15.19 15.31L15.01 15.41L14.82 15.49L14.58 15.51L14.29 15.43L13.93 15.25L13.56 15.00L13.23 14.79L12.98 14.67L12.78 14.63L12.62 14.64L12.47 14.67L12.33 14.72L12.19 14.77L12.06 14.83L11.93 14.90L11.80 14.98L11.68 15.09L11.57 15.26L11.47 15.52L11.39 15.90L11.30 16.34L11.18 16.72L11.02 16.98L10.84 17.13L10.65 17.22L10.45 17.27L10.25 17.29L10.05 17.30L9.85 17.29L9.65 17.27L9.45 17.22L9.26 17.13L9.08 16.98L8.92 16.72L8.80 16.34L8.71 15.90L8.63 15.52L8.53 15.26L8.42 15.09L8.30 14.98L8.17 14.90L8.04 14.83L7.91 14.77L7.77 14.72L7.63 14.67L7.48 14.64L7.32 14.63L7.12 14.67L6.87 14.79L6.54 15.00L6.17 15.25L5.81 15.43L5.52 15.51L5.28 15.49L5.09 15.41L4.91 15.31L4.75 15.18L4.61 15.04L4.47 14.90L4.34 14.74L4.24 14.56L4.16 14.37L4.14 14.13L4.22 13.84L4.40 13.48L4.65 13.11L4.86 12.78L4.98 12.53L5.02 12.33L5.01 12.17L4.98 12.02L4.93 11.88L4.88 11.74L4.82 11.61L4.75 11.48L4.67 11.35L4.56 11.23L4.39 11.12L4.13 11.02L3.75 10.94L3.31 10.85L2.93 10.73L2.67 10.57L2.52 10.39L2.43 10.20L2.38 10.00L2.36 9.80L2.35 9.60L2.36 9.40L2.38 9.20L2.43 9.00L2.52 8.81L2.67 8.63L2.93 8.47L3.31 8.35L3.75 8.26L4.13 8.18L4.39 8.08L4.56 7.97L4.67 7.85L4.75 7.72L4.82 7.59L4.88 7.46L4.93 7.32L4.98 7.18L5.01 7.03L5.02 6.87L4.98 6.67L4.86 6.42L4.65 6.09L4.40 5.72L4.22 5.36L4.14 5.07L4.16 4.83L4.24 4.64L4.34 4.46L4.47 4.30L4.61 4.16L4.75 4.02L4.91 3.89L5.09 3.79L5.28 3.71L5.52 3.69L5.81 3.77L6.17 3.95L6.54 4.20L6.87 4.41L7.12 4.53L7.32 4.57L7.48 4.56L7.63 4.53L7.77 4.48L7.91 4.43L8.04 4.37L8.17 4.30L8.30 4.22L8.42 4.11L8.53 3.94L8.63 3.68L8.71 3.30L8.80 2.86L8.92 2.48L9.08 2.22L9.26 2.07L9.45 1.98L9.65 1.93L9.85 1.91L10.05 1.90L10.25 1.91L10.45 1.93L10.65 1.98L10.84 2.07L11.02 2.22L11.18 2.48L11.30 2.86L11.39 3.30L11.47 3.68L11.57 3.94L11.68 4.11L11.80 4.22L11.93 4.30L12.06 4.37L12.19 4.43L12.33 4.48L12.47 4.53L12.62 4.56L12.78 4.57L12.98 4.53L13.23 4.41L13.56 4.20L13.93 3.95L14.29 3.77L14.58 3.69L14.82 3.71L15.01 3.79L15.19 3.89L15.35 4.02L15.49 4.16L15.63 4.30L15.76 4.46L15.86 4.64L15.94 4.83L15.96 5.07L15.88 5.36L15.70 5.72L15.45 6.09L15.24 6.42L15.12 6.67L15.08 6.87L15.09 7.03L15.12 7.18L15.17 7.32L15.22 7.46L15.28 7.59L15.35 7.72L15.43 7.85L15.54 7.97L15.71 8.08L15.97 8.18L16.35 8.26L16.79 8.35L17.17 8.47L17.43 8.63L17.58 8.81L17.67 9.00L17.72 9.20L17.74 9.40Z" stroke-width="1.5"/><circle cx="10.049999999999955" cy="9.600000000000023" r="2.3" stroke-width="1.4"/></svg>
<svg class="a" style="left:1953px;top:488px" width="17" height="17" viewBox="0 0 17 17"><circle cx="8.5" cy="8.5" r="7.4" fill="none" stroke="#fff" stroke-width="1.5"/><rect x="7.6" y="7.2" width="1.9" height="5.3" fill="#fff"/><circle cx="8.55" cy="5" r="1.05" fill="#fff"/></svg>
<!-- mute icon -->
<svg class="a" style="left:1710px;top:830px" width="19" height="19" viewBox="0 0 19 19" fill="none" stroke="#fff" stroke-width="1.75" stroke-linecap="round"><path d="M7 4.5a2.5 2.5 0 0 1 5 0v5a2.5 2.5 0 0 1-.4 1.3"/><path d="M7 7.5v2a2.5 2.5 0 0 0 3.4 2.3"/><path d="M4.5 9.5a5 5 0 0 0 7.7 4.2M14.5 9.5a5 5 0 0 1-.6 2.3M9.5 14.5v3M6.5 17.5h6M2.5 1.5l15 16"/></svg>
<!-- keypad icon -->
<svg class="a" style="left:1814px;top:831px" width="16" height="18" viewBox="0 0 16 18" fill="#fff"><circle cx="3.5" cy="2.5" r="1.6"/><circle cx="7.8" cy="2.5" r="1.6"/><circle cx="12.1" cy="2.5" r="1.6"/><circle cx="3.5" cy="6.6" r="1.6"/><circle cx="7.8" cy="6.6" r="1.6"/><circle cx="12.1" cy="6.6" r="1.6"/><circle cx="3.5" cy="10.6" r="1.6"/><circle cx="7.8" cy="10.6" r="1.6"/><circle cx="12.1" cy="10.6" r="1.6"/><circle cx="7.8" cy="14.8" r="1.6"/></svg>
<!-- hold icon -->
<svg class="a" style="left:1918px;top:833px" width="12" height="14" viewBox="0 0 12 14" fill="none" stroke="#fff" stroke-width="1.5"><rect x="1" y="1" width="3.4" height="12" rx="0.8"/><rect x="7.4" y="1" width="3.4" height="12" rx="0.8"/></svg>
<!-- notes icon -->
<svg class="a" style="left:1711px;top:890px" width="18" height="18" viewBox="0 0 18 18" fill="none" stroke="#fff" stroke-width="1.6" stroke-linejoin="round"><path d="M8 3H3a1.5 1.5 0 0 0-1.5 1.5v10.5A1.5 1.5 0 0 0 3 16.5h10.5A1.5 1.5 0 0 0 15 15v-5"/><path d="M13.5 1.8l2.7 2.7-7.7 7.7H5.8V9.5z"/></svg>
<!-- voicemail icon -->
<svg class="a" style="left:1812px;top:894px" width="19" height="10" viewBox="0 0 19 10" fill="none" stroke="#fff" stroke-width="1.6"><circle cx="4.5" cy="5" r="3.3"/><circle cx="14.5" cy="5" r="3.3"/><path d="M4.5 8.3h10"/></svg>

<!-- bottom nav -->
<svg class="a" style="left:1683px;top:1025px" width="24" height="19" viewBox="0 0 24 19" fill="none" stroke="#fff" stroke-width="1.6"><rect x="1.5" y="1.5" width="21" height="16" rx="0.6"/><circle cx="7.3" cy="7" r="2.1"/><path d="M3.8 15.5v-.8a2.8 2.8 0 0 1 2.8-2.8h1.4a2.8 2.8 0 0 1 2.8 2.8v.8M13 6.3h6.5M13 9.5h6.5M13 12.7h6.5"/></svg>
<svg class="a" style="left:1748px;top:1022.5px" width="25" height="23" viewBox="0 0 25 23" fill="none" stroke="#fff" stroke-width="1.6" stroke-linejoin="round"><path d="M2 1.5h20.5a1 1 0 0 1 1 1v12.5a1 1 0 0 1-1 1H9.5l-4.5 5v-5H2a1 1 0 0 1-1-1V2.5a1 1 0 0 1 1-1z"/><path d="M5 6h12M5 9h14M5 12h9"/></svg>
<svg class="a" style="left:1814px;top:1023.5px" width="22" height="22" viewBox="0 0 22 22" fill="none" stroke="#fff" stroke-width="1.7"><circle cx="11" cy="11" r="9.5"/><path d="M10.5 5.5v5.5l3.5 2.2" stroke-linecap="round"/></svg>
<svg class="a" style="left:1881px;top:1023px" width="18" height="22" viewBox="0 0 18 22" fill="#5dc356"><circle cx="3" cy="2.8" r="1.7"/><circle cx="8.5" cy="2.8" r="1.7"/><circle cx="14" cy="2.8" r="1.7"/><circle cx="3" cy="8.2" r="1.7"/><circle cx="8.5" cy="8.2" r="1.7"/><circle cx="14" cy="8.2" r="1.7"/><circle cx="3" cy="13.5" r="1.7"/><circle cx="8.5" cy="13.5" r="1.7"/><circle cx="14" cy="13.5" r="1.7"/><circle cx="8.5" cy="19" r="1.7"/></svg>
<svg class="a" style="left:1942px;top:1021px" width="26" height="26" viewBox="0 0 26 26" fill="none" stroke="#fff" stroke-linejoin="round"><path d="M22.30 13.10L22.29 13.35L22.26 13.61L22.20 13.86L22.09 14.10L21.89 14.32L21.56 14.52L21.07 14.67L20.51 14.78L20.02 14.88L19.68 15.00L19.46 15.13L19.33 15.29L19.22 15.45L19.14 15.61L19.07 15.78L19.00 15.95L18.94 16.13L18.90 16.31L18.89 16.52L18.95 16.76L19.11 17.09L19.38 17.50L19.70 17.98L19.94 18.43L20.03 18.80L20.01 19.10L19.92 19.35L19.79 19.57L19.63 19.77L19.46 19.96L19.27 20.13L19.07 20.29L18.85 20.42L18.60 20.51L18.30 20.53L17.93 20.44L17.48 20.20L17.00 19.88L16.59 19.61L16.26 19.45L16.02 19.39L15.81 19.40L15.63 19.44L15.45 19.50L15.28 19.57L15.11 19.64L14.95 19.72L14.79 19.83L14.63 19.96L14.50 20.18L14.38 20.52L14.28 21.01L14.17 21.57L14.02 22.06L13.82 22.39L13.60 22.59L13.36 22.70L13.11 22.76L12.85 22.79L12.60 22.80L12.35 22.79L12.09 22.76L11.84 22.70L11.60 22.59L11.38 22.39L11.18 22.06L11.03 21.57L10.92 21.01L10.82 20.52L10.70 20.18L10.57 19.96L10.41 19.83L10.25 19.72L10.09 19.64L9.92 19.57L9.75 19.50L9.57 19.44L9.39 19.40L9.18 19.39L8.94 19.45L8.61 19.61L8.20 19.88L7.72 20.20L7.27 20.44L6.90 20.53L6.60 20.51L6.35 20.42L6.13 20.29L5.93 20.13L5.74 19.96L5.57 19.77L5.41 19.57L5.28 19.35L5.19 19.10L5.17 18.80L5.26 18.43L5.50 17.98L5.82 17.50L6.09 17.09L6.25 16.76L6.31 16.52L6.30 16.31L6.26 16.13L6.20 15.95L6.13 15.78L6.06 15.61L5.98 15.45L5.87 15.29L5.74 15.13L5.52 15.00L5.18 14.88L4.69 14.78L4.13 14.67L3.64 14.52L3.31 14.32L3.11 14.10L3.00 13.86L2.94 13.61L2.91 13.35L2.90 13.10L2.91 12.85L2.94 12.59L3.00 12.34L3.11 12.10L3.31 11.88L3.64 11.68L4.13 11.53L4.69 11.42L5.18 11.32L5.52 11.20L5.74 11.07L5.87 10.91L5.98 10.75L6.06 10.59L6.13 10.42L6.20 10.25L6.26 10.07L6.30 9.89L6.31 9.68L6.25 9.44L6.09 9.11L5.82 8.70L5.50 8.22L5.26 7.77L5.17 7.40L5.19 7.10L5.28 6.85L5.41 6.63L5.57 6.43L5.74 6.24L5.93 6.07L6.13 5.91L6.35 5.78L6.60 5.69L6.90 5.67L7.27 5.76L7.72 6.00L8.20 6.32L8.61 6.59L8.94 6.75L9.18 6.81L9.39 6.80L9.57 6.76L9.75 6.70L9.92 6.63L10.09 6.56L10.25 6.48L10.41 6.37L10.57 6.24L10.70 6.02L10.82 5.68L10.92 5.19L11.03 4.63L11.18 4.14L11.38 3.81L11.60 3.61L11.84 3.50L12.09 3.44L12.35 3.41L12.60 3.40L12.85 3.41L13.11 3.44L13.36 3.50L13.60 3.61L13.82 3.81L14.02 4.14L14.17 4.63L14.28 5.19L14.38 5.68L14.50 6.02L14.63 6.24L14.79 6.37L14.95 6.48L15.11 6.56L15.28 6.63L15.45 6.70L15.63 6.76L15.81 6.80L16.02 6.81L16.26 6.75L16.59 6.59L17.00 6.32L17.48 6.00L17.93 5.76L18.30 5.67L18.60 5.69L18.85 5.78L19.07 5.91L19.27 6.07L19.46 6.24L19.63 6.43L19.79 6.63L19.92 6.85L20.01 7.10L20.03 7.40L19.94 7.77L19.70 8.22L19.38 8.70L19.11 9.11L18.95 9.44L18.89 9.68L18.90 9.89L18.94 10.07L19.00 10.25L19.07 10.42L19.14 10.59L19.22 10.75L19.33 10.91L19.46 11.07L19.68 11.20L20.02 11.32L20.51 11.42L21.07 11.53L21.56 11.68L21.89 11.88L22.09 12.10L22.20 12.34L22.26 12.59L22.29 12.85Z" stroke-width="1.8"/><circle cx="12.599999999999909" cy="13.099999999999909" r="2.5" stroke-width="1.7"/></svg>

<div class="a" style="left:0;top:-2px;width:2000px;height:1057px;border-radius:0 0 12px 12px;box-shadow:inset 1px -1px 0 rgba(255,255,255,0.24),inset -1px 0 0 rgba(255,255,255,0.24);pointer-events:none"></div>
</div>
</body></html>
